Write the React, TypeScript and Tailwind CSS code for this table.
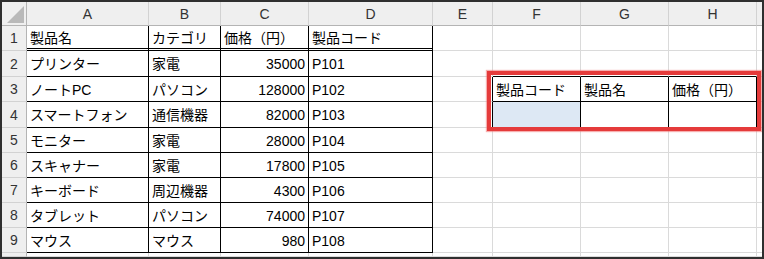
import React from "react";

const font = { fontFamily: '"Liberation Sans", "Noto Sans CJK JP", sans-serif' };

const colLetters = ["A", "B", "C", "D", "E", "F", "G", "H", ""];

const products: [string, string, string, string][] = [
  ["製品名", "カテゴリ", "価格（円）", "製品コード"],
  ["プリンター", "家電", "35000", "P101"],
  ["ノートPC", "パソコン", "128000", "P102"],
  ["スマートフォン", "通信機器", "82000", "P103"],
  ["モニター", "家電", "28000", "P104"],
  ["スキャナー", "家電", "17800", "P105"],
  ["キーボード", "周辺機器", "4300", "P106"],
  ["タブレット", "パソコン", "74000", "P107"],
  ["マウス", "マウス", "980", "P108"],
];

// lookup block in F3:H4
const lookupHead = ["製品コード", "製品名", "価格（円）"];

function Corner() {
  return (
    <div className="relative bg-[#efefef] border-r border-b border-[#b4b4b4]">
      <svg className="absolute right-[2px] bottom-[2px]" width="17" height="17" viewBox="0 0 17 17">
        <polygon points="17,0 17,17 0,17" fill="#b9b9b9" />
      </svg>
    </div>
  );
}

function cellBorders(row: number, col: number) {
  // col: 1..9 (A..I), row: 1..10
  const inTable = row <= 9 && col <= 4;
  const inLookup = (row === 3 || row === 4) && col >= 6 && col <= 8;
  let r = "border-r-[#dadada]";
  let b = "border-b border-b-[#dadada]";
  if (inTable) {
    r = "border-r-black";
    b = row === 1 ? "border-b-[3px] border-double border-b-black" : "border-b border-b-black";
  }
  if (inLookup) {
    r = "border-r-black";
    b = "border-b border-b-black";
  }
  if (col === 5 && (row === 3 || row === 4)) r = "border-r-black";
  if (row === 2 && col >= 6 && col <= 8) b = "border-b border-b-black";
  return `border-r ${r} ${b}`;
}

function cellText(row: number, col: number): { text: string; right?: boolean } {
  if (row <= 9 && col <= 4) {
    const v = products[row - 1][col - 1];
    return { text: v, right: col === 3 && row > 1 };
  }
  if (row === 3 && col >= 6 && col <= 8) return { text: lookupHead[col - 6] };
  return { text: "" };
}

export default function App() {
  const rows = Array.from({ length: 10 }, (_, i) => i + 1);
  const cols = Array.from({ length: 9 }, (_, i) => i + 1);

  return (
    <div className="w-[764px] h-[259px] bg-[#2f2f2f] p-[2px]" style={font}>
      <div className="relative w-full h-full bg-white overflow-hidden">
        <div className="grid grid-cols-[25px_122px_72px_88px_124px_60px_88px_88px_88px_1fr] grid-rows-[24px_25px_26px_25px_26px_25px_25px_25px_25px_25px_1fr] w-full h-full text-[14px] leading-none">
          <Corner />
          {colLetters.map((l, i) => (
            <div
              key={"h" + i}
              className={`flex items-center justify-center bg-[#efefef] border-b border-[#b4b4b4] text-[#333] ${
                i < 8 ? "border-r border-r-[#d2d2d2]" : ""
              }`}
            >
              {l}
            </div>
          ))}
          {rows.map((row) => (
            <React.Fragment key={row}>
              {/* row 10 is cut off at the window edge, so no label shows */}
              <div className="flex items-center justify-center bg-[#efefef] border-r border-b border-r-[#b4b4b4] border-b-[#d2d2d2] text-[#333]">
                {row < 10 ? row : ""}
              </div>
              {cols.map((col) => {
                const { text, right } = cellText(row, col);
                const selected = row === 4 && col === 6;
                return (
                  <div
                    key={col}
                    className={`flex items-center px-[3px] pt-[1px] whitespace-nowrap overflow-hidden text-black ${cellBorders(
                      row,
                      col
                    )} ${right ? "justify-end" : ""} ${selected ? "bg-[#dde8f4]" : ""}`}
                  >
                    {text}
                  </div>
                );
              })}
            </React.Fragment>
          ))}
        </div>
        {/* red frame around the lookup block */}
        <div className="absolute left-[485px] top-[69px] w-[274px] h-[60px] border-[4px] border-[#e53b3b] shadow-[0_0_1px_1px_rgba(240,110,110,0.55)] pointer-events-none" />
      </div>
    </div>
  );
}
